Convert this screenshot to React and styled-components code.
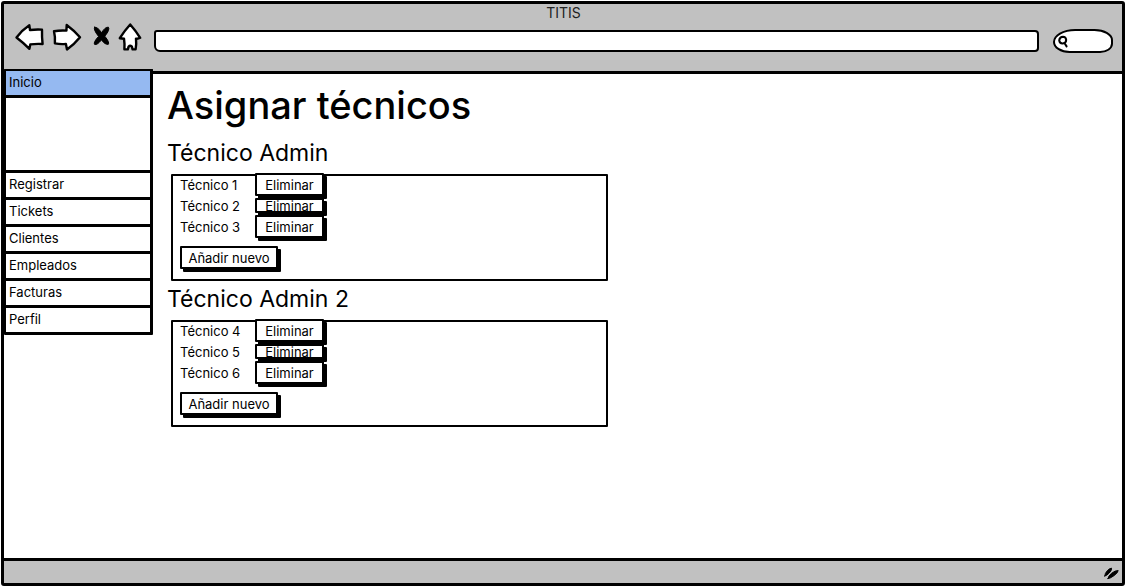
import React from "react";
import styled, { createGlobalStyle } from "styled-components";

const GlobalStyle = createGlobalStyle`
  *, *::before, *::after { box-sizing: border-box; }
  body { margin: 0; background: #fff; }
  body, button, input {
    font-family: Inter, "Liberation Sans", sans-serif;
    font-size: 13px;
    line-height: 16px;
    color: #000;
  }
  h1, h2, p, ul { margin: 0; padding: 0; font-weight: 400; }
  ul { list-style: none; }
`;

const Page = styled.div`
  min-height: 100vh;
  padding: 1px;
  display: flex;
`;

const Window = styled.div`
  flex: 1;
  display: flex;
  flex-direction: column;
  border: 3px solid #000;
  border-radius: 3px;
`;

const Chrome = styled.header`
  background: #c1c1c1;
  border-bottom: 3px solid #000;
  padding: 1px 9px 18px 10px;
`;

const WindowTitle = styled.p`
  text-align: center;
  font-size: 14px;
  color: #222;
`;

const Toolbar = styled.div`
  display: flex;
  align-items: center;
  gap: 8px;
  height: 32px;
`;

const IconButton = styled.button`
  border: 0;
  padding: 0;
  background: none;
  display: flex;
`;

const Glyph = styled.svg`
  display: block;
  fill: #fff;
  stroke: #000;
  stroke-width: 2.4;
  stroke-linejoin: round;
  stroke-linecap: round;
`;

const AddressField = styled.input`
  flex: 1;
  min-width: 0;
  height: 22px;
  margin: 8px 6px 0 4px;
  padding: 0 8px;
  border: 2px solid #000;
  border-radius: 3px 4px 4px 6px;
  background: #fff;
`;

const SearchBox = styled.label`
  display: flex;
  align-items: center;
  width: 60px;
  height: 24px;
  margin-top: 8px;
  padding-left: 2px;
  border: 2px solid #000;
  border-radius: 24px 20px 14px 18px / 14px 12px 10px 12px;
  background: #fff;
`;

const SearchInput = styled.input`
  flex: 1;
  min-width: 0;
  border: 0;
  padding: 0;
  background: transparent;
  outline: 0;
`;

const Body = styled.div`
  flex: 1;
  display: flex;
  align-items: flex-start;
`;

const Sidebar = styled.nav`
  width: 149px;
  flex: none;
  margin-top: -5px;
  position: relative;
  background: #fff;
  border: solid #000;
  border-width: 2px 3px 0 2px;
  border-radius: 1px;
`;

const NavItem = styled.li`
  border-bottom: 3px solid #000;
  height: ${(p) => (p.$spacer ? 75 : 27)}px;
  background: ${(p) => (p.$active ? "#95b9f1" : "#fff")};
`;

const NavLink = styled.a`
  display: block;
  padding: 3px;
  color: inherit;
  text-decoration: none;
`;

const Main = styled.main`
  flex: 1;
  min-width: 0;
  padding: 9px 14px;
`;

const PageTitle = styled.h1`
  font-size: 38px;
  font-weight: 500;
  line-height: 44px;
`;

const GroupTitle = styled.h2`
  font-size: 23px;
  line-height: 28px;
  padding: 12px 0 7px;

  section + section > & { padding-top: 4px; }
`;

const Panel = styled.div`
  max-width: 437px;
  height: 107px;
  margin-left: 4px;
  padding: 0 7px;
  border: 2px solid #000;
  border-radius: 1px;
`;

const TechList = styled.ul`
  margin-top: -2px;
`;

const TechRow = styled.li`
  display: grid;
  grid-template: 21px / 75px auto;
  justify-content: start;
  align-items: center;
`;

const SketchButton = styled.button`
  display: flex;
  align-items: center;
  justify-content: center;
  width: ${(p) => (p.$wide ? 98 : 69)}px;
  height: ${(p) => (p.$compact ? 15 : 23)}px;
  margin-top: ${(p) => (p.$wide ? 9 : 0)}px;
  padding: 0;
  border: 2px solid #000;
  border-radius: 1px;
  background: #fff;
  box-shadow: 3px 3px 0 #000;
  white-space: nowrap;
`;

const StatusBar = styled.footer`
  display: flex;
  justify-content: flex-end;
  align-items: center;
  height: 25px;
  border-top: 3px solid #000;
  background: #c1c1c1;
`;

const NAV = ["Registrar", "Tickets", "Clientes", "Empleados", "Facturas", "Perfil"];

const GROUPS = [
  { name: "Técnico Admin", techs: ["Técnico 1", "Técnico 2", "Técnico 3"] },
  { name: "Técnico Admin 2", techs: ["Técnico 4", "Técnico 5", "Técnico 6"] },
];

function Group({ name, techs }) {
  return (
    <section>
      <GroupTitle>{name}</GroupTitle>
      <Panel>
        <TechList>
          {techs.map((tech, i) => (
            <TechRow key={tech}>
              <span>{tech}</span>
              <SketchButton type="button" $compact={i === 1}>Eliminar</SketchButton>
            </TechRow>
          ))}
        </TechList>
        <SketchButton type="button" $wide>Añadir nuevo</SketchButton>
      </Panel>
    </section>
  );
}

export default function App() {
  return (
    <>
      <GlobalStyle />
      <Page>
        <Window>
          <Chrome>
            <WindowTitle>TITIS</WindowTitle>
            <Toolbar>
              <IconButton type="button" aria-label="Atrás">
                <Glyph width="30" height="30" viewBox="0 0 30 30">
                  <path d="M2.5 15.5 Q8 8 15.3 3.2 L16 8 Q22 7.2 28 7.6 Q27.8 15 28.6 22 Q22 21.6 16.3 22.4 L15.4 26.8 Q9 20.5 2.5 15.5Z" />
                </Glyph>
              </IconButton>
              <IconButton type="button" aria-label="Adelante">
                <Glyph width="30" height="30" viewBox="0 0 30 30">
                  <path d="M2 9.2 Q8 8.2 14.4 8.6 L14.7 3 Q22 8.4 28 15.2 Q22 22.6 15 27.4 L13.9 21.9 Q9 22.6 2.9 21.4 Q3.4 15 2 9.2Z" />
                </Glyph>
              </IconButton>
              <IconButton type="button" aria-label="Detener">
                <Glyph width="20" height="30" viewBox="0 0 20 30">
                  <path
                    d="M4.6 5.2 Q8 5 11.6 10.8 Q15 4.8 18.4 5.2 Q20.2 7.6 14.8 14.2 Q20 20.6 18.2 22.4 Q15.2 23 11.4 18 Q7 23.4 4.6 22.4 Q3 20.4 8.6 14.4 Q3 7.6 4.6 5.2Z"
                    fill="#000"
                    strokeWidth="1"
                  />
                </Glyph>
              </IconButton>
              <IconButton type="button" aria-label="Página principal">
                <Glyph width="24" height="30" viewBox="0 0 24 30">
                  <path d="M12.2 2.5 Q17.6 8.6 22.2 15.8 Q20 17 18 16.6 Q18.6 22 17.6 27.2 L14.6 27.4 L13.8 24.4 Q12 23.2 10.6 24.6 L9.8 27.4 L6.4 27.2 Q6.8 22 6 16.8 L1.8 16.2 Q6.6 8.6 12.2 2.5Z" />
                </Glyph>
              </IconButton>
              <AddressField type="text" aria-label="Dirección" />
              <SearchBox>
                <Glyph width="12" height="14" viewBox="0 0 12 14" aria-hidden="true">
                  <path d="M9.2 5.8 Q8.8 2.8 6 2.8 Q2.6 3 2.2 6.4 Q2.6 9.6 5.8 9.4 Q9.2 9.2 9.2 5.8Z M7.6 9.2 L9.6 12.4" strokeWidth="2" />
                </Glyph>
                <SearchInput type="text" aria-label="Buscar" />
              </SearchBox>
            </Toolbar>
          </Chrome>
          <Body>
            <Sidebar>
              <ul>
                <NavItem $active><NavLink href="#inicio">Inicio</NavLink></NavItem>
                <NavItem $spacer aria-hidden="true" />
                {NAV.map((label) => (
                  <NavItem key={label}>
                    <NavLink href={"#" + label.toLowerCase()}>{label}</NavLink>
                  </NavItem>
                ))}
              </ul>
            </Sidebar>
            <Main>
              <PageTitle>Asignar técnicos</PageTitle>
              {GROUPS.map((g) => <Group key={g.name} {...g} />)}
            </Main>
          </Body>
          <StatusBar>
            <Glyph width="20" height="18" viewBox="0 0 20 18" aria-hidden="true">
              <path
                d="M2.8 13 Q2.6 10.6 5.4 7.6 Q8 5 9.6 5.2 Q10 7 7.2 10 Q4.6 13 2.8 13Z M6 15.6 Q6 13.4 9.4 10.4 Q13.4 7.2 16.2 7.6 Q15.8 10 11.8 12.8 Q8 15.6 6 15.6Z"
                fill="#000"
                strokeWidth="1"
              />
            </Glyph>
          </StatusBar>
        </Window>
      </Page>
    </>
  );
}
